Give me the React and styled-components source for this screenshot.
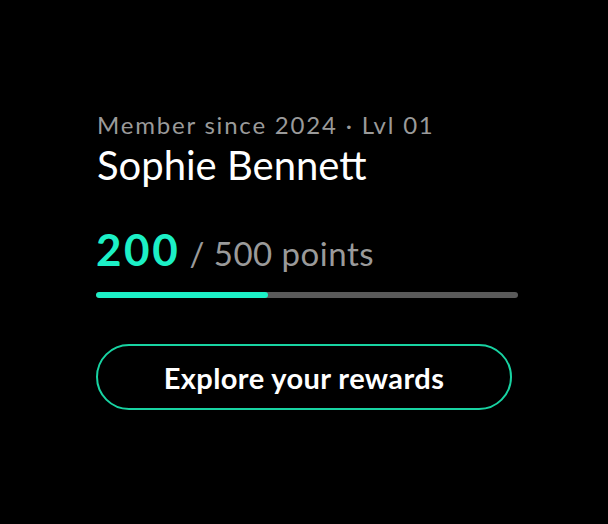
import React from "react";
import styled, { createGlobalStyle } from "styled-components";

const GlobalStyle = createGlobalStyle`
  html, body {
    margin: 0;
    padding: 0;
    background: #000;
  }
  body {
    font-family: Lato, "Noto Sans", sans-serif;
    -webkit-font-smoothing: antialiased;
  }
`;

const Page = styled.div`
  width: 608px;
  height: 524px;
  background: #000;
  display: flex;
  flex-direction: column;
  padding: 107px 0 0 96px;
  box-sizing: border-box;
`;

const Card = styled.div`
  width: 422px;
  display: flex;
  flex-direction: column;
`;

const Meta = styled.div`
  font-size: 24px;
  line-height: 36px;
  letter-spacing: 1.8px;
  color: #9a9a9a;
  font-weight: 400;
  padding-left: 1px;
  white-space: nowrap;
`;

const Name = styled.div`
  font-size: 40px;
  line-height: 44px;
  color: #fff;
  font-weight: 400;
  padding-left: 1px;
  white-space: nowrap;
`;

const Points = styled.div`
  display: flex;
  align-items: baseline;
  gap: 9px;
  margin-top: 38px;
  height: 48px;
`;

const Current = styled.span`
  font-size: 44px;
  line-height: 48px;
  font-weight: 700;
  letter-spacing: 2.6px;
  color: #1cf0c6;
`;

const Total = styled.span`
  font-size: 33px;
  letter-spacing: 0.5px;
  color: #9a9a9a;
`;

const Track = styled.div`
  margin-top: 19px;
  height: 6px;
  border-radius: 3px;
  background: #5a5a5a;
  overflow: hidden;
`;

const Fill = styled.div`
  height: 100%;
  background: #1cf0c6;
  border-radius: 3px;
`;

const Button = styled.button`
  margin-top: 46px;
  width: 416px;
  height: 66px;
  padding: 0;
  border-radius: 33px;
  border: 2px solid #18d3a2;
  background: transparent;
  color: #fff;
  font-family: Lato, "Noto Sans", sans-serif;
  font-size: 29px;
  font-weight: 700;
  letter-spacing: 0.4px;
  cursor: pointer;
`;

export default function App() {
  const points = 200;
  const goal = 500;
  return (
    <>
      <GlobalStyle />
      <Page>
        <Card>
          <Meta>Member since 2024 · Lvl 01</Meta>
          <Name>Sophie Bennett</Name>
          <Points>
            <Current>{points}</Current>
            <Total>/ {goal} points</Total>
          </Points>
          <Track>
            <Fill style={{ width: `calc(${(points / goal) * 100}% + 3px)` }} />
          </Track>
          <Button>Explore your rewards</Button>
        </Card>
      </Page>
    </>
  );
}
